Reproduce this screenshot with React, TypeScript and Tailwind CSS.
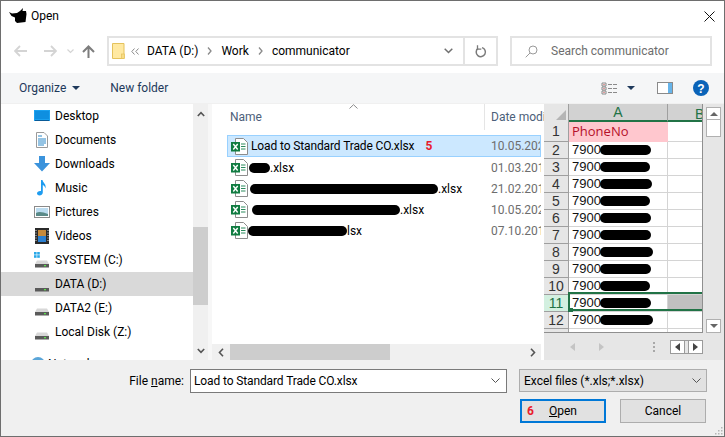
const files = [
  { blob: 'w-[21px]', left: '-ml-[2px]', suffix: '.xlsx', date: '01.03.2018' },
  { blob: 'w-[188px]', left: '-ml-[1px]', suffix: '.xlsx', date: '21.02.2017' },
  { blob: 'w-[148px]', left: 'ml-[1px]', suffix: '.xlsx', date: '10.05.2021' },
  { blob: 'w-[99px]', left: '-ml-[3px]', suffix: 'lsx', date: '07.10.2016' },
]

const phoneBlobs = ['w-[51px]', 'w-[50px]', 'w-[52px]', 'w-[50px]', 'w-[51px]', 'w-[51px]', 'w-[53px]', 'w-[51px]', 'w-[50px]', 'w-[51px]', 'w-[53px]', 'w-[51px]']

function DriveIcon({ windows }: { windows?: boolean }) {
  return (
    <svg width="16" height="16" viewBox="0 0 16 16">
      {windows && (
        <g fill="#29a8e8">
          <rect x="0" y="0" width="2.6" height="2.6" />
          <rect x="3.2" y="0" width="2.6" height="2.6" />
          <rect x="0" y="3.2" width="2.6" height="2.6" />
          <rect x="3.2" y="3.2" width="2.6" height="2.6" />
        </g>
      )}
      <path d="M3 8.5 L13 8.5 L15 12 L1 12 Z" fill="#d8d8d8" />
      <rect x="1" y="12" width="14" height="3.5" fill="#5a5a5a" />
      <rect x="10" y="13" width="2" height="1.3" fill="#5ce04c" />
    </svg>
  )
}

function SidebarIcon({ name }: { name: string }) {
  if (name === 'Desktop')
    return (
      <svg width="16" height="16" viewBox="0 0 16 16">
        <rect x="0" y="2" width="16" height="11" fill="#1aa1f0" />
        <rect x="1" y="3" width="14" height="8" fill="#0e8fe0" />
        <rect x="1" y="12" width="14" height="1" fill="#0a5a96" />
      </svg>
    )
  if (name === 'Documents')
    return (
      <svg width="16" height="16" viewBox="0 0 16 16">
        <path d="M2.5 .5 H10 L13.5 4 V15.5 H2.5 Z" fill="#fff" stroke="#9a9a9a" />
        <path d="M4 4 H8 M4 7 H12 M4 9 H12 M4 11 H12 M4 13 H10" stroke="#2b88c8" />
      </svg>
    )
  if (name === 'Downloads')
    return (
      <svg width="16" height="16" viewBox="0 0 16 16">
        <path d="M5 0 H11 V7 H16 L8 15.5 L0 7 H5 Z" fill="#3b93dc" />
      </svg>
    )
  if (name === 'Music')
    return (
      <svg width="16" height="16" viewBox="0 0 16 16">
        <path d="M7 0 H8.5 C9 3 12.5 4 11.5 8.5 C11 6.5 10 5.5 8.8 5 V12.5 C8.8 14.5 7 15.5 5.5 15.5 C4 15.5 3 14.6 3 13.3 C3 11.8 5 10.5 7 11 Z" fill="#1e9cf0" />
      </svg>
    )
  if (name === 'Pictures')
    return (
      <svg width="16" height="16" viewBox="0 0 16 16">
        <rect x=".5" y="2.5" width="15" height="11" fill="#fff" stroke="#8a8a8a" />
        <rect x="2" y="4" width="12" height="8" fill="#bcdcf0" />
        <path d="M2 9 C5 7 9 8 14 10 V12 H2 Z" fill="#5a8a88" />
      </svg>
    )
  if (name === 'Videos')
    return (
      <svg width="16" height="16" viewBox="0 0 16 16">
        <rect x="1" y="0" width="14" height="16" fill="#2a2a2a" />
        <rect x="4" y="2" width="8" height="6" fill="#c88a3a" />
        <rect x="4" y="8" width="8" height="6" fill="#2b7fd0" />
        <path d="M2 2 V14 M14 2 V14" stroke="#ddd" strokeDasharray="1 1.5" />
      </svg>
    )
  return <DriveIcon windows={name === 'SYSTEM (C:)'} />
}

function ExcelIcon() {
  return (
    <svg width="17" height="17" viewBox="0 0 17 17" className="shrink-0">
      <path d="M4.5 .5 H12.5 L16.5 4.5 V16.5 H4.5 Z" fill="#fff" stroke="#8c8c8c" />
      <path d="M10 6 H14.5 M10 8.5 H14.5 M10 11 H14.5" stroke="#2b8a5c" />
      <rect x="0" y="4" width="9" height="9.5" fill="#107c41" />
      <path d="M2.3 6 L6.7 11.5 M6.7 6 L2.3 11.5" stroke="#fff" strokeWidth="1.4" />
    </svg>
  )
}

function Blob({ className }: { className: string }) {
  return <span className={`inline-block h-[10px] rounded-full bg-black ${className}`} />
}

function SheetRow({ n, blob, selected }: { n: number; blob: string; selected?: boolean }) {
  return (
    <div className="flex h-[17px] shrink-0">
      <div className={`flex w-[25px] items-center justify-center border-r border-b border-[#9f9f9f] ${selected ? 'bg-[#d3f0e0] text-[#217346]' : 'bg-[#e6e6e6] text-[#333]'}`}>{n}</div>
      <div className="flex w-[99px] items-center border-r border-b border-[#d4d4d4] bg-white pl-[3px] text-[13px] text-[#111]">
        7900
        <Blob className={`-ml-[1px] ${blob}`} />
      </div>
      <div className={`flex-1 border-b border-[#d4d4d4] ${selected ? 'bg-[#c0c0c0]' : 'bg-white'}`} />
    </div>
  )
}

export default function App() {
  const places = ['Desktop', 'Documents', 'Downloads', 'Music', 'Pictures', 'Videos', 'SYSTEM (C:)', 'DATA (D:)', 'DATA2 (E:)', 'Local Disk (Z:)']

  return (
    <div className="flex h-[437px] w-[725px] flex-col overflow-hidden border border-[#6e6e6e] bg-white font-['Roboto',sans-serif] text-[12px] text-black">
      {/* Title */}
      <div className="flex h-[30px] shrink-0 items-center pl-[8px]">
        <svg width="18" height="16" viewBox="0 0 18 16">
          <path d="M0 4 L3 5.5 L8 5 L11 3 L14 0 L13.5 3 L17 3 L17.5 6 L16.5 14 L8 15 L6 13 L6 9.5 L2.5 8 Z" fill="#000" />
        </svg>
        <span className="ml-[4px] text-[12px]">Open</span>
        <svg width="11" height="11" viewBox="0 0 11 11" className="ml-auto mr-[9px]">
          <path d="M.5 .5 L10.5 10.5 M10.5 .5 L.5 10.5" stroke="#111" strokeWidth="1" />
        </svg>
      </div>

      {/* Address row */}
      <div className="flex h-[42px] shrink-0 pt-[5px]">
        <div className="flex h-[30px] w-[106px] shrink-0 items-center pl-[13px]">
          <svg width="13" height="12" viewBox="0 0 13 12">
            <path d="M13 6 H1.5 M6 1 L1 6 L6 11" fill="none" stroke="#d4d4d4" strokeWidth="1.8" />
          </svg>
          <svg width="13" height="12" viewBox="0 0 13 12" className="ml-[17px]">
            <path d="M0 6 H11.5 M7 1 L12 6 L7 11" fill="none" stroke="#d4d4d4" strokeWidth="1.8" />
          </svg>
          <svg width="7" height="5" viewBox="0 0 7 5" className="ml-[10px]">
            <path d="M.5 .5 L3.5 3.5 L6.5 .5" fill="none" stroke="#d4d4d4" strokeWidth="1.2" />
          </svg>
          <svg width="13" height="13" viewBox="0 0 13 13" className="ml-[8px]">
            <path d="M6.5 13 V2 M1 7 L6.5 1.5 L12 7" fill="none" stroke="#7d7d7d" strokeWidth="2" />
          </svg>
        </div>
        <div className="flex h-[30px] w-[391px] shrink-0 items-center border-2 border-[#e3e3e3]">
          <svg width="13" height="16" viewBox="0 0 13 16" className="ml-[3px] shrink-0">
            <path d="M.5 .5 H12 V15.5 H.5 Z" fill="#ffe9a2" stroke="#e4c25c" />
            <rect x="9.5" y="11" width="3" height="4.5" fill="#f8dc84" stroke="#e4c25c" strokeWidth=".7" />
          </svg>
          <svg width="8" height="7" viewBox="0 0 8 7" className="ml-[6px]">
            <path d="M3.5 .5 L.8 3.5 L3.5 6.5 M7.5 .5 L4.8 3.5 L7.5 6.5" fill="none" stroke="#8a8a8a" />
          </svg>
          <span className="ml-[8px]">DATA (D:)</span>
          <svg width="5" height="8" viewBox="0 0 5 8" className="ml-[9px]">
            <path d="M1 .5 L4 4 L1 7.5" fill="none" stroke="#8a8a8a" strokeWidth="1.3" />
          </svg>
          <span className="ml-[9px]">Work</span>
          <svg width="5" height="8" viewBox="0 0 5 8" className="ml-[9px]">
            <path d="M1 .5 L4 4 L1 7.5" fill="none" stroke="#8a8a8a" strokeWidth="1.3" />
          </svg>
          <span className="ml-[9px]">communicator</span>
          <svg width="9" height="6" viewBox="0 0 9 6" className="ml-auto mr-[10px]">
            <path d="M.7 .7 L4.5 4.5 L8.3 .7" fill="none" stroke="#707070" strokeWidth="1.5" />
          </svg>
          <div className="flex h-full w-[33px] items-center justify-center border-l-2 border-[#e3e3e3]">
            <svg width="12" height="13" viewBox="0 0 12 13">
              <path d="M7 2.6 A4.6 4.6 0 1 1 3 3.4" fill="none" stroke="#7a7a7a" strokeWidth="1.5" />
              <path d="M2.5 .3 V4.2 H6.3" fill="none" stroke="#7a7a7a" strokeWidth="1.3" />
            </svg>
          </div>
        </div>
        <div className="ml-[12px] flex h-[30px] w-[202px] shrink-0 items-center border-2 border-[#e3e3e3] pl-[13px] text-[#6d6d6d]">
          <svg width="13" height="13" viewBox="0 0 13 13">
            <circle cx="8" cy="5" r="4" fill="none" stroke="#9a9a9a" />
            <path d="M5 8 L.7 12.3" stroke="#9a9a9a" />
          </svg>
          <span className="ml-[13px]">Search communicator</span>
        </div>
      </div>

      {/* Toolbar */}
      <div className="flex h-[30px] shrink-0 items-center bg-[#f5f6f7] pl-[18px] text-[#1e395b]">
        <span>Organize</span>
        <span className="ml-[6px] h-0 w-0 border-x-[4px] border-t-[4px] border-x-transparent border-t-[#1e395b]" />
        <span className="ml-[30px]">New folder</span>
        <svg width="17" height="13" viewBox="0 0 17 13" className="ml-auto">
          <path d="M1 1 H5 V4 H1 Z M1 5 H5 V8 H1 Z M1 9 H5 V12 H1 Z" fill="none" stroke="#8a8a8a" />
          <path d="M2.5 2.5 H3.5 M2.5 6.5 H3.5 M2.5 10.5 H3.5" stroke="#d04040" />
          <path d="M7 2.5 H11 M12 2.5 H16 M7 6.5 H11 M12 6.5 H16 M7 10.5 H11 M12 10.5 H16" stroke="#8a8a8a" />
        </svg>
        <span className="ml-[9px] h-0 w-0 border-x-[4px] border-t-[4px] border-x-transparent border-t-[#1e395b]" />
        <svg width="16" height="12" viewBox="0 0 16 12" className="ml-[22px]">
          <rect x=".5" y=".5" width="15" height="11" fill="#fff" stroke="#8a8a8a" />
          <rect x="11" y="1" width="4" height="10" fill="#66b4ea" />
        </svg>
        <svg width="16" height="16" viewBox="0 0 16 16" className="ml-[20px] mr-[15px]">
          <circle cx="8" cy="8" r="8" fill="#0a63b8" />
          <text x="8" y="12.5" textAnchor="middle" fontSize="12" fontWeight="700" fill="#fff" fontFamily="Liberation Sans, sans-serif">?</text>
        </svg>
      </div>
      <div className="h-px shrink-0 bg-[#f0f0f0]" />

      {/* Main */}
      <div className="flex h-[256px] shrink-0">
        <div className="w-[192px] shrink-0 overflow-hidden">
          {places.map((p) => (
            <div key={p} className={`flex h-[24px] items-center pl-[33px] ${p === 'DATA (D:)' ? 'bg-[#d9d9d9]' : ''}`}>
              <SidebarIcon name={p} />
              <span className="ml-[5px]">{p}</span>
            </div>
          ))}
          <div className="mt-[8px] flex h-[24px] items-center pl-[29px]">
            <svg width="16" height="16" viewBox="0 0 16 16">
              <circle cx="8" cy="8" r="7" fill="#5aa5d8" />
            </svg>
            <span className="ml-[2px]">Network</span>
          </div>
        </div>

        <div className="flex w-[15px] shrink-0 flex-col items-center bg-[#f0f0f0]">
          <svg width="8" height="6" viewBox="0 0 8 6" className="mt-[7px]">
            <path d="M.8 5 L4 1.6 L7.2 5" fill="none" stroke="#555" strokeWidth="1.6" />
          </svg>
          <div className="mt-[110px] h-[78px] w-full bg-[#cdcdcd]" />
          <svg width="8" height="6" viewBox="0 0 8 6" className="mt-[43px]">
            <path d="M.8 1 L4 4.4 L7.2 1" fill="none" stroke="#555" strokeWidth="1.6" />
          </svg>
        </div>
        <div className="w-[4px] shrink-0 bg-[#f7f7f7]" />

        {/* File list */}
        <div className="relative flex w-[332px] shrink-0 flex-col">
          <svg width="9" height="5" viewBox="0 0 9 5" className="absolute left-[137px] top-0">
            <path d="M.5 4.5 L4.5 .7 L8.5 4.5" fill="none" stroke="#8a8a8a" />
          </svg>
          <div className="flex h-[26px] shrink-0 items-center overflow-hidden pr-[3px] text-[#4c607a]">
            <span className="ml-[18px] w-[254px] shrink-0">Name</span>
            <div className="h-full w-px shrink-0 bg-[#e5e5e5]" />
            <span className="ml-[6px] whitespace-nowrap">Date modified</span>
          </div>
          <div className="flex flex-1 flex-col pl-[15px] pr-[3px] pt-[5px]">
            <div className="flex h-[22px] shrink-0 items-center overflow-hidden whitespace-nowrap border border-[#99d1ff] bg-[#cce8ff]">
              <div className="flex w-[263px] shrink-0 items-center pl-[3px]">
                <ExcelIcon />
                <span className="ml-[3px] tracking-[-0.12px]">Load to Standard Trade CO.xlsx</span>
                <span className="ml-[11px] font-bold text-[#e81c2e]">5</span>
              </div>
              <span className="text-[#6d6d6d]">10.05.2021</span>
            </div>
            {files.map((f) => (
              <div key={f.date + f.blob} className="flex h-[21px] shrink-0 items-center overflow-hidden whitespace-nowrap pl-px">
                <div className="flex w-[263px] shrink-0 items-center pl-[3px]">
                  <ExcelIcon />
                  <span className="ml-[3px] flex items-center">
                    <Blob className={`${f.left} ${f.blob}`} />
                    {f.suffix}
                  </span>
                </div>
                <span className="text-[#6d6d6d]">{f.date}</span>
              </div>
            ))}
          </div>
          <div className="flex h-[16px] shrink-0 items-center bg-[#f0f0f0] pl-[1px] mr-[3px]">
            <svg width="6" height="9" viewBox="0 0 6 9" className="ml-[5px]">
              <path d="M5 .8 L1.5 4.5 L5 8.2" fill="none" stroke="#555" strokeWidth="1.6" />
            </svg>
            <div className="ml-[6px] h-full w-[160px] bg-[#cdcdcd]" />
            <svg width="6" height="9" viewBox="0 0 6 9" className="ml-auto mr-[5px]">
              <path d="M1 .8 L4.5 4.5 L1 8.2" fill="none" stroke="#555" strokeWidth="1.6" />
            </svg>
          </div>
        </div>

        {/* Spreadsheet preview */}
        <div className="flex flex-1 bg-[#e6e6e6] font-['Liberation_Sans',sans-serif]">
          <div className="flex w-[159px] shrink-0 flex-col text-[14px]">
            <div className="relative h-[229px] shrink-0 overflow-hidden border-r border-b border-[#8f8f8f]">
              <div className="flex h-[18px]">
                <div className="flex w-[25px] items-end justify-end border-r border-[#9f9f9f] bg-[#e6e6e6] p-[2px]">
                  <span className="h-0 w-0 border-b-[10px] border-l-[10px] border-b-[#b5b5b5] border-l-transparent" />
                </div>
                <div className="flex w-[99px] items-center justify-center border-r border-[#9f9f9f] border-b-2 border-b-[#217346] bg-[#d2d2d2] text-[#217346]">A</div>
                <div className="flex-1 overflow-hidden border-b-2 border-[#217346] bg-[#d2d2d2] pl-[27px] text-[#217346]">B</div>
              </div>
              <div className="flex h-[20px]">
                <div className="flex w-[25px] items-center justify-center border-r border-b border-[#9f9f9f] bg-[#e6e6e6] text-[#333]">1</div>
                <div className="flex w-[99px] items-center border-r border-b border-[#ffc7ce] bg-[#ffc7ce] pl-[3px] font-['Open_Sans',sans-serif] text-[13px] text-[#b5102a]">PhoneNo</div>
                <div className="flex-1 border-b border-[#d4d4d4] bg-white" />
              </div>
              {phoneBlobs.map((b, i) => (
                <SheetRow key={i} n={i + 2} blob={b} selected={i === 9} />
              ))}
              {/* active cell */}
              <div className="absolute left-[24px] right-0 top-[188px] h-[19px] border-y-2 border-l-2 border-[#217346]" />
              <div className="absolute left-[24px] top-[204px] h-[4px] w-[5px] bg-[#217346]" />
            </div>
            <div className="flex flex-1 items-center">
              <span className="ml-[26px] h-0 w-0 border-y-[4px] border-r-[5px] border-y-transparent border-r-[#c4c4c4]" />
              <span className="ml-[24px] h-0 w-0 border-y-[4px] border-l-[5px] border-y-transparent border-l-[#c4c4c4]" />
              <div className="ml-[49px] flex flex-col gap-[2px]">
                <span className="h-[2px] w-[2px] bg-[#a8a8a8]" />
                <span className="h-[2px] w-[2px] bg-[#a8a8a8]" />
                <span className="h-[2px] w-[2px] bg-[#a8a8a8]" />
              </div>
              <div className="ml-[15px] flex h-[14px] w-[34px] border border-[#9a9a9a] bg-white">
                <div className="flex flex-1 items-center justify-center border-r border-[#9a9a9a]">
                  <span className="h-0 w-0 border-y-[4px] border-r-[5px] border-y-transparent border-r-[#444]" />
                </div>
                <div className="w-[3px] bg-[#e6e6e6]" />
                <div className="flex flex-1 items-center justify-center border-l border-[#9a9a9a]">
                  <span className="h-0 w-0 border-y-[4px] border-l-[5px] border-y-transparent border-l-[#444]" />
                </div>
              </div>
            </div>
          </div>
          <div className="ml-[3px] flex h-[229px] w-[15px] shrink-0 flex-col pt-[3px]">
            <div className="flex h-[13px] items-center justify-center border border-[#b0b0b0] bg-white">
              <span className="h-0 w-0 border-x-[4px] border-b-[4px] border-x-transparent border-b-[#666]" />
            </div>
            <div className="h-[17px] border-x border-b border-[#b0b0b0] bg-white" />
            <div className="flex-1" />
            <div className="flex h-[14px] items-center justify-center border border-[#b0b0b0] bg-white">
              <span className="h-0 w-0 border-x-[4px] border-t-[4px] border-x-transparent border-t-[#666]" />
            </div>
          </div>
        </div>
      </div>

      {/* Bottom */}
      <div className="relative flex-1 bg-[#f0f0f0] pt-[9px]">
        <div className="flex h-[24px] items-center">
          <span className="w-[189px] pr-[6px] text-right">File <span className="underline">n</span>ame:</span>
          <div className="flex h-[24px] w-[317px] items-center border border-[#7a7a7a] bg-white pl-[3px]">
            <span className="tracking-[-0.12px]">Load to Standard Trade CO.xlsx</span>
            <svg width="9" height="6" viewBox="0 0 9 6" className="ml-auto mr-[6px]">
              <path d="M.5 .5 L4.5 4.5 L8.5 .5" fill="none" stroke="#555" />
            </svg>
          </div>
          <div className="ml-[12px] flex h-[23px] w-[188px] items-center self-start border border-[#adadad] bg-[#e1e1e1] pl-[4px]">
            <span>Excel files (*.xls;*.xlsx)</span>
            <svg width="9" height="6" viewBox="0 0 9 6" className="ml-auto mr-[5px]">
              <path d="M.5 .5 L4.5 4.5 L8.5 .5" fill="none" stroke="#555" />
            </svg>
          </div>
        </div>
        <div className="ml-[519px] mt-[6px] flex">
          <button className="relative flex h-[24px] w-[86px] items-center justify-center border-2 border-[#0078d7] bg-[#e1e1e1]">
            <span className="absolute left-[5px] font-bold text-[#e81c2e]">6</span>
            <span><span className="underline">O</span>pen</span>
          </button>
          <button className="ml-[14px] flex h-[24px] w-[86px] items-center justify-center border border-[#adadad] bg-[#e1e1e1]">Cancel</button>
        </div>
        <svg width="9" height="9" viewBox="0 0 9 9" className="absolute bottom-[1px] right-[1px]">
          <path d="M7 1 h1.5 v1.5 h-1.5 Z M4 4 h1.5 v1.5 h-1.5 Z M7 4 h1.5 v1.5 h-1.5 Z M1 7 h1.5 v1.5 h-1.5 Z M4 7 h1.5 v1.5 h-1.5 Z M7 7 h1.5 v1.5 h-1.5 Z" fill="#b5b5b5" />
        </svg>
      </div>
    </div>
  )
}
